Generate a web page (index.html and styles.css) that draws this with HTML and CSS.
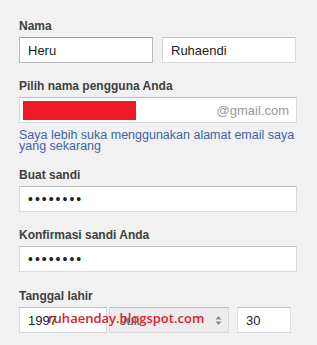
FILE: index.html
```html
<!DOCTYPE html>
<html lang="id">
<head>
  <meta charset="UTF-8">
  <title>Buat Akun Google</title>
  <link rel="stylesheet" href="styles.css">
</head>
<body>
  <form class="signup">
    <div class="field first">
      <label>Nama</label>
      <div class="name-row">
        <input type="text" class="box dark" value="Heru">
        <input type="text" class="box" value="Ruhaendi">
      </div>
    </div>

    <div class="field">
      <label>Pilih nama pengguna Anda</label>
      <div class="box user">
        <span class="redact"></span>
        <span class="domain">@gmail.com</span>
      </div>
      <a class="alt-link" href="#">Saya lebih suka menggunakan alamat email saya yang sekarang</a>
    </div>

    <div class="field">
      <label>Buat sandi</label>
      <input type="password" class="box wide" value="12345678">
    </div>

    <div class="field">
      <label>Konfirmasi sandi Anda</label>
      <input type="password" class="box wide" value="12345678">
    </div>

    <div class="field last">
      <label>Tanggal lahir</label>
      <div class="date-row">
        <input type="text" class="box year" value="1997">
        <div class="box month">
          <span>Juli</span>
          <svg class="spin" width="7" height="11" viewBox="0 0 7 11"><path d="M0.5 4.5 L3.5 1 L6.5 4.5 Z M0.5 6.5 L3.5 10 L6.5 6.5 Z" fill="#8a8a8a"/></svg>
        </div>
        <input type="text" class="box day" value="30">
      </div>
      <span class="watermark">ruhaenday.blogspot.com</span>
    </div>
  </form>
</body>
</html>
```

FILE: styles.css
```css
body {
  margin: 0;
  background-color: #f1f1f1;
  font-family: "Liberation Sans", Arial, sans-serif;
  font-size: 13px;
  color: #222;
}
.signup {
  padding: 19px 20px 0 19px;
}
.field {
  margin-top: 16px;
  position: relative;
}
.field.first {
  margin-top: 0;
}
.field.last {
  margin-top: 17px;
}
label {
  display: block;
  font-weight: bold;
  font-size: 12px;
  color: #404040;
  line-height: 15px;
  margin-bottom: 3px;
}
.box {
  box-sizing: border-box;
  height: 26px;
  background-color: #fff;
  border: 1px solid #d9d9d9;
  border-top-color: #c0c0c0;
  font-family: inherit;
  font-size: 13px;
  color: #222;
  padding: 0 8px;
  margin: 0;
  outline: none;
}
.box.dark {
  border-color: #b9b9b9;
  border-top-color: #a0a0a0;
}
.name-row {
  display: flex;
  gap: 9px;
}
.name-row .box {
  width: 134px;
}
.user {
  width: 278px;
  display: flex;
  align-items: center;
  justify-content: space-between;
  padding: 0 7px 0 3px;
}
.redact {
  width: 113px;
  height: 19px;
  background-color: #ed1c24;
}
.domain {
  color: #999;
  font-size: 13px;
}
.alt-link {
  display: block;
  margin-top: 7px;
  color: #3b64a8;
  text-decoration: none;
  line-height: 11px;
  font-size: 12.5px;
}
.wide {
  width: 278px;
  font-size: 14px;
  letter-spacing: 2px;
}
.date-row {
  display: flex;
}
.year {
  width: 88px;
  margin-right: 2px;
}
.month {
  width: 120px;
  background-color: #ececec;
  display: flex;
  align-items: center;
  justify-content: space-between;
  padding: 0 6px 0 10px;
  margin-right: 8px;
  color: #555;
}
.day {
  width: 54px;
}
.watermark {
  position: absolute;
  left: 29px;
  top: 20px;
  font-family: "Open Sans", "DejaVu Sans", sans-serif;
  font-weight: 600;
  font-size: 13px;
  color: #e0202c;
}
```
